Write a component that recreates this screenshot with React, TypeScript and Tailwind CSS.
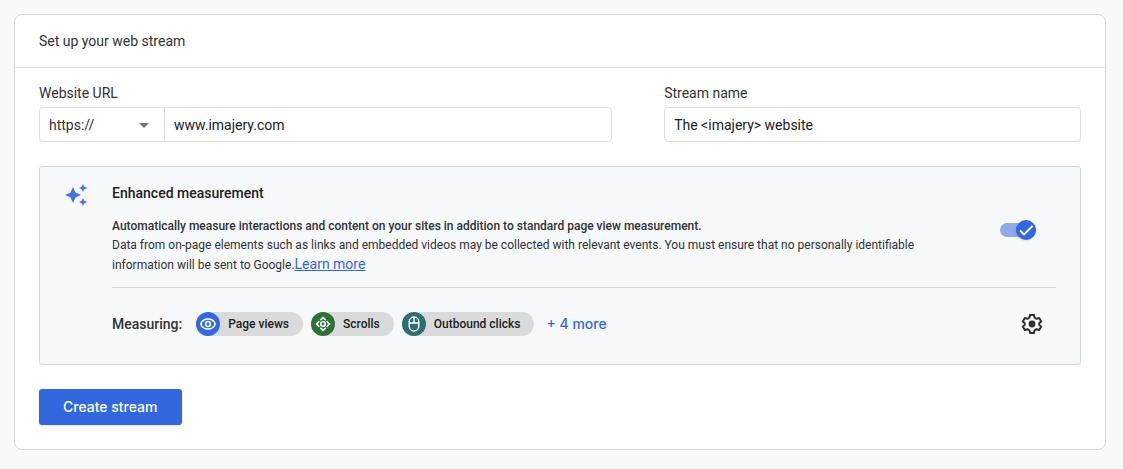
import type { ReactNode } from "react";

function Sparkles() {
  return (
    <svg viewBox="0 0 24 24" className="size-6 shrink-0 fill-[#4674e0]" aria-hidden="true">
      <path d="M9 4 11.500 9.500 17 12 11.500 14.500 9 20 6.500 14.500 1 12 6.500 9.500Z" />
      <path d="M19 1 20.300 3.700 23.500 5 20.300 6.300 19 9 17.700 6.300 15 5 17.700 3.700Z" />
      <path d="M19 15 20.300 17.700 23.500 19 20.300 20.300 19 23 17.700 20.300 15 19 17.700 17.700Z" />
    </svg>
  );
}

function EyeIcon() {
  return (
    <svg viewBox="0 0 24 24" className="size-6" fill="none" stroke="white" strokeWidth="1.500" aria-hidden="true">
      <path d="M4.700 12C6 8.800 8.800 7 12 7s6 1.800 7.300 5c-1.300 3.200-4.100 5-7.300 5s-6-1.800-7.300-5Z" />
      <circle cx="12" cy="12" r="2.400" />
    </svg>
  );
}

function ScrollIcon() {
  return (
    <svg viewBox="0 0 24 24" className="size-6" fill="none" stroke="white" strokeWidth="1.600" aria-hidden="true">
      <path d="M9.300 8.300 12 5.600 14.700 8.300M9.300 15.700 12 18.400 14.700 15.700M8.300 9.300 5.600 12 8.300 14.700M15.700 9.300 18.400 12 15.700 14.700" />
      <circle cx="12" cy="12" r="2.200" />
    </svg>
  );
}

function MouseIcon() {
  return (
    <svg viewBox="0 0 24 24" className="size-6" fill="none" stroke="white" strokeWidth="1.400" aria-hidden="true">
      <rect x="7.200" y="5" width="9.600" height="14" rx="4.800" />
      <path d="M7.200 11h9.600M12 5v6" />
    </svg>
  );
}

function GearIcon() {
  return (
    <svg viewBox="0 0 24 24" className="size-6" aria-hidden="true">
      <path
        d="M10 3h4l.6 2.700 1.900 1.100 2.700-.8 2 3.400-2 1.900v1.400l2 1.900-2 3.400-2.700-.8-1.900 1.100L14 21h-4l-.6-2.700-1.900-1.100-2.700.8-2-3.400 2-1.900v-1.400l-2-1.900 2-3.400 2.700.8 1.900-1.100Z"
        fill="none"
        stroke="#2f3236"
        strokeWidth="2"
        strokeLinejoin="round"
      />
      <circle cx="12" cy="12" r="3.400" fill="#2f3236" />
    </svg>
  );
}

function Chip({ icon, color, label }: { icon: ReactNode; color: string; label: string }) {
  return (
    <li className="flex h-6 items-center gap-2 rounded-full bg-[#dadada] pr-3.5">
      <span className={`size-6 rounded-full ${color}`}>{icon}</span>
      <span className="text-xs font-medium text-[#202124]">{label}</span>
    </li>
  );
}

export default function App() {
  return (
    <main className="min-h-screen bg-[#f7f8fa] py-3.5 pr-[17px] pl-3.5 font-['Roboto',sans-serif] text-sm text-[#2f3236]">
      <form
        onSubmit={(event) => event.preventDefault()}
        className="rounded-lg border border-[#d4d6d9] bg-white"
      >
        <header className="border-b border-[#dcdee1] px-6 py-4">
          <h1 className="leading-5">Set up your web stream</h1>
        </header>

        <div className="px-6 pt-[15px] pb-6">
          <div className="grid grid-cols-[11fr_8fr] gap-[52px]">
            <div>
              <label htmlFor="url" className="block leading-5">Website URL</label>
              <div className="mt-1 flex h-[35px] rounded border border-[#dcdee1]">
                <div className="relative w-[125px] shrink-0 border-r border-[#dcdee1]">
                  <select aria-label="Protocol" className="size-full appearance-none bg-transparent pl-[9px]">
                    <option>https://</option>
                    <option>http://</option>
                  </select>
                  <svg viewBox="0 0 10 5" className="pointer-events-none absolute top-[15px] right-[15px] h-[5px] w-2.5 fill-[#757575]" aria-hidden="true">
                    <path d="M0 0h10L5 5Z" />
                  </svg>
                </div>
                <input id="url" defaultValue="www.imajery.com" className="min-w-0 flex-1 rounded-r px-[9px] text-[#202124]" />
              </div>
            </div>
            <div>
              <label htmlFor="name" className="block leading-5">Stream name</label>
              <input
                id="name"
                defaultValue="The <imajery> website"
                className="mt-1 h-[35px] w-full rounded border border-[#dcdee1] px-[9px] text-[#202124]"
              />
            </div>
          </div>

          <section className="mt-6 flex gap-6 rounded-[3px] border border-[#d4d6d9] bg-[#f7f8fa] px-6 pt-4 pb-7">
            <Sparkles />
            <div className="min-w-0 flex-1">
              <h2 className="font-medium leading-5 text-[#202124]">Enhanced measurement</h2>
              <div className="mt-3.5 flex items-start justify-between gap-6 border-b border-[#d4d6d9] pb-3">
                <div className="max-w-[880px] text-xs leading-[19px]">
                  <p className="font-medium">
                    Automatically measure interactions and content on your sites in addition to standard page view
                    measurement.
                  </p>
                  <p>
                    Data from on-page elements such as links and embedded videos may be collected with relevant events.
                    You must ensure that no personally identifiable
                    <br />
                    information will be sent to Google.
                    <a href="#learn" className="text-sm leading-[19px] text-[#3367d6] underline">Learn more</a>
                  </p>
                </div>
                <label className="relative mt-[3px] mr-5 flex h-5 w-9 shrink-0 items-center">
                  <input type="checkbox" role="switch" defaultChecked aria-label="Enhanced measurement" className="absolute inset-0 size-full appearance-none" />
                  <span className="pointer-events-none h-3.5 w-full rounded-full bg-[#8fa9eb]" />
                  <span className="pointer-events-none absolute right-0 size-5 rounded-full bg-[#3367dc] shadow-sm">
                    <svg viewBox="0 0 20 20" className="size-5" fill="none" stroke="white" strokeWidth="1.800" aria-hidden="true">
                      <path d="m4 10.500 4 4 8.500-8.500" />
                    </svg>
                  </span>
                </label>
              </div>
              <div className="mt-6 flex items-center">
                <span className="font-medium">Measuring:</span>
                <ul className="ml-3.5 flex gap-2">
                  <Chip icon={<EyeIcon />} color="bg-[#3367dc]" label="Page views" />
                  <Chip icon={<ScrollIcon />} color="bg-[#2d7237]" label="Scrolls" />
                  <Chip icon={<MouseIcon />} color="bg-[#2c6e74]" label="Outbound clicks" />
                </ul>
                <a href="#more" className="ml-3 font-['Inter',sans-serif] font-medium text-[#3367d6]">+ 4 more</a>
                <button type="button" aria-label="Settings" className="mr-3 ml-auto">
                  <GearIcon />
                </button>
              </div>
            </div>
          </section>

          <button type="submit" className="mt-6 h-9 rounded-[3px] bg-[#3367dc] px-6 font-['Inter',sans-serif] font-medium text-white shadow">
            Create stream
          </button>
        </div>
      </form>
    </main>
  );
}
